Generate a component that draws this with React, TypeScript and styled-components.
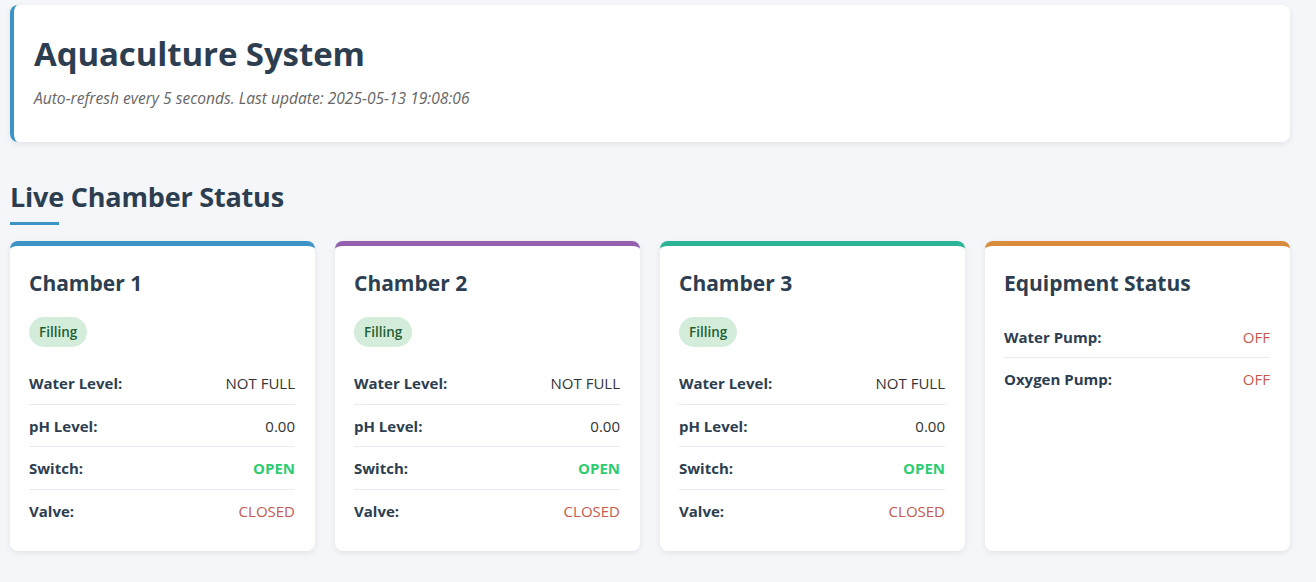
import React from "react";
import styled, { createGlobalStyle } from "styled-components";

const Global = createGlobalStyle`
  html, body { margin: 0; padding: 0; }
  body {
    background: #f4f6fa;
    font-family: "Open Sans", "Noto Sans", sans-serif;
    color: #2c3e50;
  }
`;

const Page = styled.div`
  width: 1280px;
  padding: 5px 10px 20px 10px;
`;

const Header = styled.header`
  background: #fff;
  border-left: 4px solid #3c94c6;
  border-radius: 8px;
  box-shadow: 0 2px 6px rgba(0, 0, 0, 0.08);
  padding: 28px 20px 33px 20px;
  height: 76px;
`;

const Title = styled.h1`
  margin: 0;
  font-size: 33px;
  font-weight: 700;
  color: #2c3e50;
  line-height: 42px;
  letter-spacing: -0.1px;
`;

const Subtitle = styled.p`
  margin: 13px 0 0 0;
  font-size: 15.6px;
  font-style: italic;
  color: #666;
  line-height: 20px;
`;

const SectionTitle = styled.h2`
  margin: 37px 0 0 0;
  font-size: 27px;
  font-weight: 700;
  color: #2c3e50;
  line-height: 36px;
  letter-spacing: -0.2px;
`;

const Underline = styled.div`
  width: 49px;
  height: 3px;
  background: #3c94c6;
  margin-top: 7px;
`;

const Grid = styled.div`
  display: grid;
  grid-template-columns: repeat(4, 1fr);
  gap: 20px;
  margin-top: 16px;
`;

const Card = styled.div<{ $accent: string }>`
  background: #fff;
  border-top: 5px solid ${(p) => p.$accent};
  border-radius: 8px;
  box-shadow: 0 2px 6px rgba(0, 0, 0, 0.08);
  padding: 22px 20px 20px 19px;
  height: 263px;
`;

const CardTitle = styled.h3`
  margin: 0;
  font-size: 21px;
  font-weight: 700;
  color: #2c3e50;
  line-height: 30px;
`;

const Badge = styled.span`
  display: inline-block;
  margin-top: 19px;
  background: #d4eddb;
  color: #1f5f34;
  font-size: 13.5px;
  font-weight: 600;
  line-height: 20px;
  padding: 5px 10px;
  border-radius: 15px;
`;

const Rows = styled.div<{ $top: number }>`
  margin-top: ${(p) => p.$top}px;
`;

const Row = styled.div<{ $h: number }>`
  display: flex;
  justify-content: space-between;
  align-items: center;
  height: ${(p) => p.$h}px;
  border-bottom: 1px solid #e8ebef;
  &:last-child { border-bottom: none; }
`;

const Label = styled.span`
  font-size: 15px;
  font-weight: 700;
  color: #2c3e50;
`;

type Tone = "plain" | "good" | "bad";

const Value = styled.span<{ $tone: Tone }>`
  font-size: 15px;
  font-weight: ${(p) => (p.$tone === "good" ? 700 : 400)};
  color: ${(p) =>
    p.$tone === "good" ? "#2ecc71" : p.$tone === "bad" ? "#c55a50" : "#333"};
`;

const chambers = [
  { name: "Chamber 1", accent: "#3c94c6" },
  { name: "Chamber 2", accent: "#9460ae" },
  { name: "Chamber 3", accent: "#2ab394" },
];

const rows: { label: string; value: string; tone: Tone }[] = [
  { label: "Water Level:", value: "NOT FULL", tone: "plain" },
  { label: "pH Level:", value: "0.00", tone: "plain" },
  { label: "Switch:", value: "OPEN", tone: "good" },
  { label: "Valve:", value: "CLOSED", tone: "bad" },
];

const equipment: { label: string; value: string; tone: Tone }[] = [
  { label: "Water Pump:", value: "OFF", tone: "bad" },
  { label: "Oxygen Pump:", value: "OFF", tone: "bad" },
];

export default function App() {
  return (
    <Page>
      <Global />
      <Header>
        <Title>Aquaculture System</Title>
        <Subtitle>
          Auto-refresh every 5 seconds. Last update: 2025-05-13 19:08:06
        </Subtitle>
      </Header>
      <SectionTitle>Live Chamber Status</SectionTitle>
      <Underline />
      <Grid>
        {chambers.map((c) => (
          <Card key={c.name} $accent={c.accent}>
            <CardTitle>{c.name}</CardTitle>
            <Badge>Filling</Badge>
            <Rows $top={15}>
              {rows.map((r) => (
                <Row key={r.label} $h={41.7}>
                  <Label>{r.label}</Label>
                  <Value $tone={r.tone}>{r.value}</Value>
                </Row>
              ))}
            </Rows>
          </Card>
        ))}
        <Card $accent="#d98c3c">
          <CardTitle>Equipment Status</CardTitle>
          <Rows $top={18}>
            {equipment.map((r) => (
              <Row key={r.label} $h={41}>
                <Label>{r.label}</Label>
                <Value $tone={r.tone}>{r.value}</Value>
              </Row>
            ))}
          </Rows>
        </Card>
      </Grid>
    </Page>
  );
}
